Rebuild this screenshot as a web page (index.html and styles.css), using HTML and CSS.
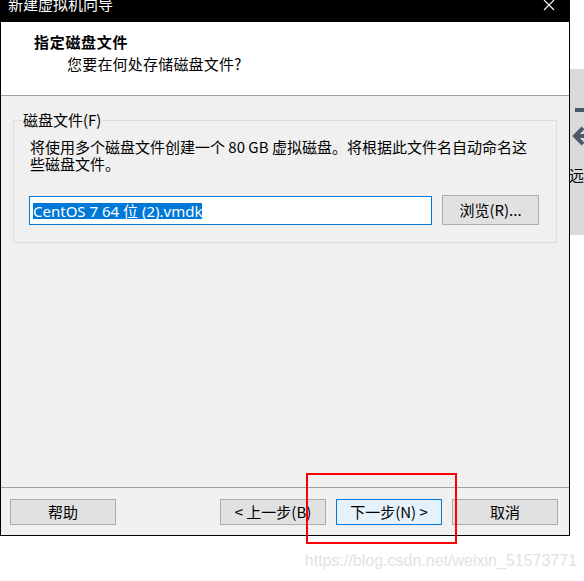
FILE: index.html
```html
<!DOCTYPE html>
<html lang="zh-CN">
<head>
<meta charset="utf-8">
<title>新建虚拟机向导</title>
<link rel="stylesheet" href="styles.css">
</head>
<body>
<div class="page">
  <div class="screen">
    <div class="window">
      <div class="titlebar">
        <span class="title">新建虚拟机向导</span>
        <svg class="close" width="12" height="12" viewBox="0 0 12 12"><path d="M1 1 L11 11 M11 1 L1 11" stroke="#fff" stroke-width="1.1" fill="none"/></svg>
      </div>
      <div class="header">
        <div class="h-title">指定磁盘文件</div>
        <div class="h-sub">您要在何处存储磁盘文件?</div>
      </div>
      <div class="content">
        <fieldset class="group">
          <legend>磁盘文件(F)</legend>
          <div class="group-body">
            <p class="desc">将使用多个磁盘文件创建一个 80 GB 虚拟磁盘。将根据此文件名自动命名这<br>些磁盘文件。</p>
            <div class="file-row">
              <div class="input"><span class="sel">CentOS 7 64 位 (2).vmdk</span></div>
              <button class="btn browse">浏览(R)...</button>
            </div>
          </div>
        </fieldset>
      </div>
      <div class="footer">
        <button class="btn">帮助</button>
        <div class="spacer"></div>
        <button class="btn">&lt; 上一步(B)</button>
        <button class="btn default">下一步(N) &gt;</button>
        <button class="btn">取消</button>
      </div>
    </div>
    <div class="side">
      <div class="side-top"></div>
      <div class="side-panel">
        <div class="side-bar"></div>
        <svg class="side-arrow" width="14" height="20" viewBox="0 0 14 20"><path d="M11 2 L3 10 L11 18" stroke="#4a5a6a" stroke-width="4" fill="none"/><path d="M4 10 H14" stroke="#4a5a6a" stroke-width="4"/></svg>
        <span class="side-text">远</span>
      </div>
    </div>
  </div>
  <div class="watermark">https://blog.csdn.net/weixin_51573771</div>
  <div class="annotation"></div>
</div>
</body>
</html>
```

FILE: styles.css
```css
body {
  margin: 0;
  background: #fff;
  font-family: "Noto Sans CJK SC", "Noto Sans", sans-serif;
  color: #000;
}

.page {
  position: relative;
  width: 584px;
  height: 581px;
  overflow: hidden;
}

.screen {
  display: flex;
  align-items: flex-start;
}

.window {
  width: 570px;
  height: 536px;
  box-sizing: border-box;
  border: 1px solid #000;
  border-top: 0;
  display: flex;
  flex-direction: column;
  background: #f0f0f0;
  flex: none;
}

.titlebar {
  height: 22px;
  flex: none;
  background: #000;
  color: #fff;
  display: flex;
  justify-content: space-between;
  align-items: flex-start;
  overflow: hidden;
}

.title {
  font-size: 15px;
  line-height: 15px;
  margin-top: -4px;
  margin-left: 7px;
}

.close {
  margin-top: -1px;
  margin-right: 14px;
}

.header {
  height: 74px;
  flex: none;
  box-sizing: border-box;
  background: #fff;
  border-bottom: 1px solid #a0a0a0;
  padding: 10px 0 0 33px;
}

.h-title {
  font-size: 15px;
  font-weight: bold;
  line-height: 20px;
  letter-spacing: 0.7px;
}

.h-sub {
  font-size: 15px;
  line-height: 20px;
  margin-top: 2px;
  padding-left: 33px;
  letter-spacing: 0.2px;
}

.content {
  flex: 1;
  padding-top: 14px;
}

.group {
  margin: 0 12px;
  padding: 0;
  border: 1px solid #dcdcdc;
  min-width: 0;
}

.group legend {
  margin-left: 8px;
  padding: 0 1px;
  font-size: 15px;
  line-height: 20px;
}

.group-body {
  padding: 0 17px 17px 15px;
}

.desc {
  margin: 8px 0 0 1px;
  font-size: 15px;
  line-height: 17px;
}

.file-row {
  display: flex;
  gap: 10px;
  align-items: flex-end;
  margin-top: 23px;
}

.input {
  flex: 1;
  height: 29px;
  box-sizing: border-box;
  border: 1px solid #0078d7;
  background: #fff;
  padding: 1px 3px;
}

.sel {
  display: inline-block;
  background: #0078d7;
  color: #fff;
  font-family: "Noto Sans", "Noto Sans CJK SC", sans-serif;
  font-size: 15px;
  line-height: 16px;
  height: 16px;
}

.btn {
  font-family: "Noto Sans CJK SC", "Noto Sans", sans-serif;
  font-size: 15px;
  line-height: 20px;
  color: #000;
  background: #e1e1e1;
  border: 1px solid #adadad;
  width: 106px;
  height: 26px;
  padding: 0;
  box-sizing: border-box;
  flex: none;
}

.browse {
  width: 97px;
  height: 30px;
}

.default {
  background: #e5f1fb;
  border-color: #0078d7;
}

.footer {
  height: 48px;
  flex: none;
  box-sizing: border-box;
  border-top: 1px solid #a0a0a0;
  padding: 11px 11px 0 9px;
  display: flex;
  align-items: flex-start;
  gap: 10px;
}

.spacer {
  flex: 1;
}

.side {
  width: 14px;
  flex: none;
  display: flex;
  flex-direction: column;
  overflow: hidden;
}

.side-top {
  height: 69px;
  background: #fff;
}

.side-panel {
  height: 166px;
  background: #dadada;
  display: flex;
  flex-direction: column;
  align-items: flex-start;
  padding-top: 39px;
  box-sizing: border-box;
}

.side-bar {
  width: 9px;
  height: 4px;
  margin-left: 5px;
  background: #4a5a6a;
}

.side-arrow {
  margin-top: 14px;
  margin-left: 2px;
}

.side-text {
  margin-top: 20px;
  font-size: 15px;
  line-height: 18px;
  margin-left: -1px;
  color: #000;
}

.watermark {
  margin-top: 16px;
  padding-right: 7px;
  text-align: right;
  font-family: "Liberation Sans", Arial, sans-serif;
  font-size: 16px;
  line-height: 18px;
  color: #e2e2e2;
}

.annotation {
  position: absolute;
  left: 306px;
  top: 473px;
  width: 151px;
  height: 71px;
  box-sizing: border-box;
  border: 2px solid #ff0000;
}
```
